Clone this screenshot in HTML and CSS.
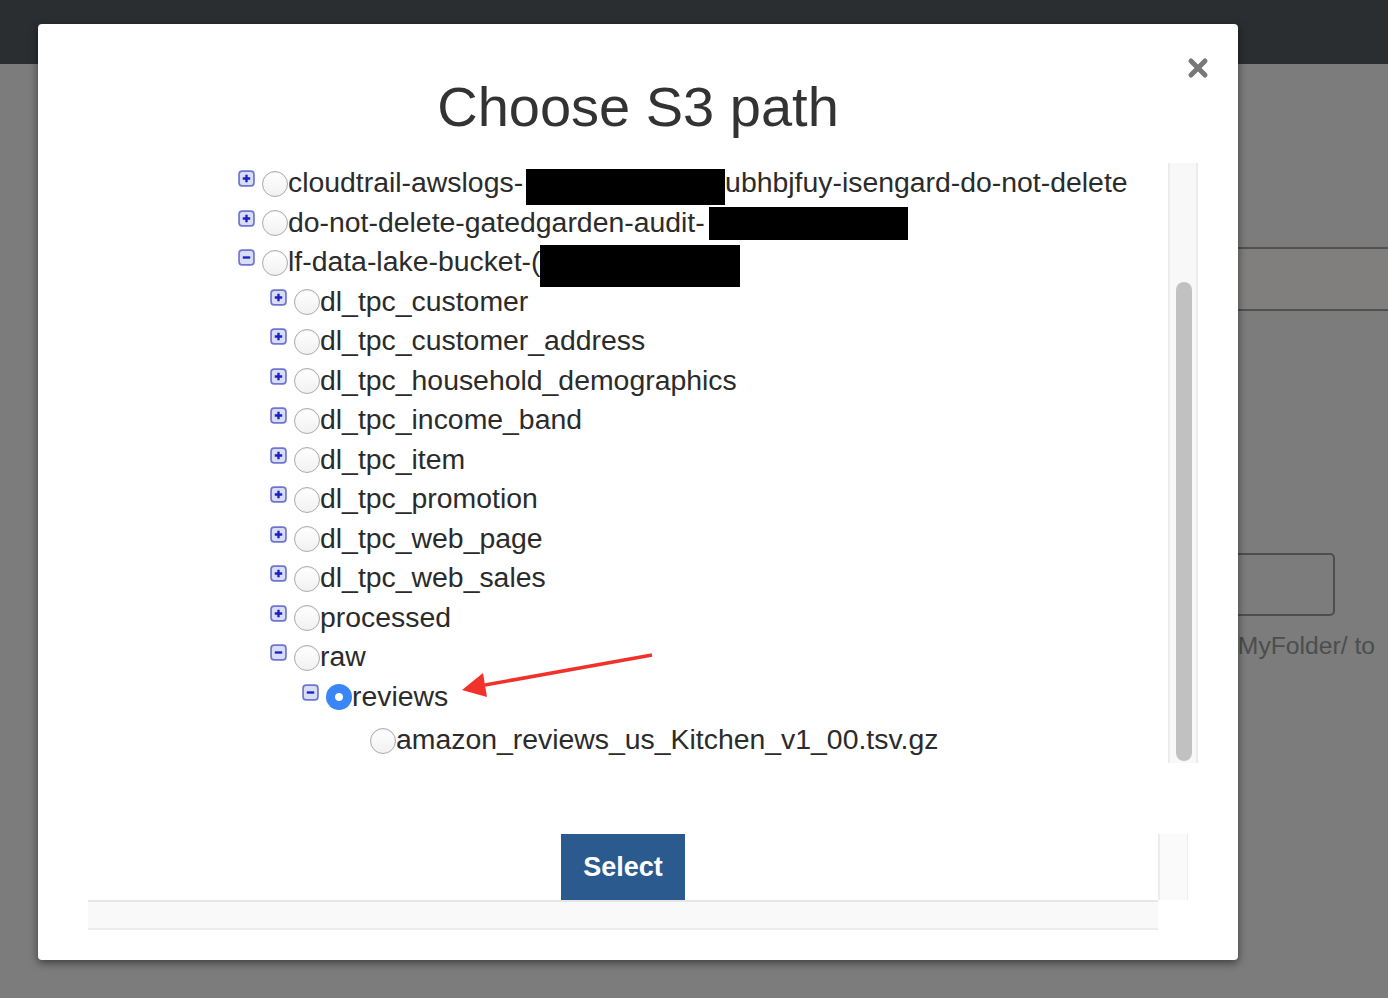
FILE: index.html
```html
<!DOCTYPE html>
<html lang="en">
<head>
<meta charset="utf-8">
<title>Choose S3 path</title>
<link rel="stylesheet" href="styles.css">
</head>
<body>
<header class="navbar"></header>
<main class="page">
  <div class="band"></div>
  <div class="field"></div>
  <p class="hint">/MyFolder/ to</p>
</main>

<div class="modal">
  <button class="close" aria-label="Close">
    <svg viewBox="0 0 22 22" width="22" height="22"><path d="M4 4L18 18M18 4L4 18"/></svg>
  </button>
  <h2 class="modal-title">Choose S3 path</h2>

  <div class="tree-box">
    <div class="tree">
      <ul class="level level-root">
        <li>
          <div class="row">
            <svg class="toggle" viewBox="0 0 16 16"><rect x="1" y="1" width="14" height="14" rx="3"/><path d="M4.5 8h7M8 4.5v7"/></svg>
            <input type="radio" name="s3path" class="radio">
            <span class="label">cloudtrail-awslogs-</span><span class="redact r1"></span><span class="label">ubhbjfuy-isengard-do-not-delete</span>
          </div>
        </li>
        <li>
          <div class="row">
            <svg class="toggle" viewBox="0 0 16 16"><rect x="1" y="1" width="14" height="14" rx="3"/><path d="M4.5 8h7M8 4.5v7"/></svg>
            <input type="radio" name="s3path" class="radio">
            <span class="label">do-not-delete-gatedgarden-audit-</span><span class="redact r2"></span>
          </div>
        </li>
        <li>
          <div class="row">
            <svg class="toggle" viewBox="0 0 16 16"><rect x="1" y="1" width="14" height="14" rx="3"/><path d="M4.5 8h7"/></svg>
            <input type="radio" name="s3path" class="radio">
            <span class="label">lf-data-lake-bucket-(</span><span class="redact r3"></span>
          </div>
          <ul class="level">
            <li><div class="row"><svg class="toggle" viewBox="0 0 16 16"><rect x="1" y="1" width="14" height="14" rx="3"/><path d="M4.5 8h7M8 4.5v7"/></svg><input type="radio" name="s3path" class="radio"><span class="label">dl_tpc_customer</span></div></li>
            <li><div class="row"><svg class="toggle" viewBox="0 0 16 16"><rect x="1" y="1" width="14" height="14" rx="3"/><path d="M4.5 8h7M8 4.5v7"/></svg><input type="radio" name="s3path" class="radio"><span class="label">dl_tpc_customer_address</span></div></li>
            <li><div class="row"><svg class="toggle" viewBox="0 0 16 16"><rect x="1" y="1" width="14" height="14" rx="3"/><path d="M4.5 8h7M8 4.5v7"/></svg><input type="radio" name="s3path" class="radio"><span class="label">dl_tpc_household_demographics</span></div></li>
            <li><div class="row"><svg class="toggle" viewBox="0 0 16 16"><rect x="1" y="1" width="14" height="14" rx="3"/><path d="M4.5 8h7M8 4.5v7"/></svg><input type="radio" name="s3path" class="radio"><span class="label">dl_tpc_income_band</span></div></li>
            <li><div class="row"><svg class="toggle" viewBox="0 0 16 16"><rect x="1" y="1" width="14" height="14" rx="3"/><path d="M4.5 8h7M8 4.5v7"/></svg><input type="radio" name="s3path" class="radio"><span class="label">dl_tpc_item</span></div></li>
            <li><div class="row"><svg class="toggle" viewBox="0 0 16 16"><rect x="1" y="1" width="14" height="14" rx="3"/><path d="M4.5 8h7M8 4.5v7"/></svg><input type="radio" name="s3path" class="radio"><span class="label">dl_tpc_promotion</span></div></li>
            <li><div class="row"><svg class="toggle" viewBox="0 0 16 16"><rect x="1" y="1" width="14" height="14" rx="3"/><path d="M4.5 8h7M8 4.5v7"/></svg><input type="radio" name="s3path" class="radio"><span class="label">dl_tpc_web_page</span></div></li>
            <li><div class="row"><svg class="toggle" viewBox="0 0 16 16"><rect x="1" y="1" width="14" height="14" rx="3"/><path d="M4.5 8h7M8 4.5v7"/></svg><input type="radio" name="s3path" class="radio"><span class="label">dl_tpc_web_sales</span></div></li>
            <li><div class="row"><svg class="toggle" viewBox="0 0 16 16"><rect x="1" y="1" width="14" height="14" rx="3"/><path d="M4.5 8h7M8 4.5v7"/></svg><input type="radio" name="s3path" class="radio"><span class="label">processed</span></div></li>
            <li>
              <div class="row"><svg class="toggle" viewBox="0 0 16 16"><rect x="1" y="1" width="14" height="14" rx="3"/><path d="M4.5 8h7"/></svg><input type="radio" name="s3path" class="radio"><span class="label">raw</span></div>
              <ul class="level">
                <li>
                  <div class="row"><svg class="toggle" viewBox="0 0 16 16"><rect x="1" y="1" width="14" height="14" rx="3"/><path d="M4.5 8h7"/></svg><input type="radio" name="s3path" class="radio" checked><span class="label">reviews</span></div>
                  <ul class="level">
                    <li><div class="row leaf"><input type="radio" name="s3path" class="radio"><span class="label">amazon_reviews_us_Kitchen_v1_00.tsv.gz</span></div></li>
                  </ul>
                </li>
              </ul>
            </li>
          </ul>
        </li>
      </ul>
    </div>
    <div class="track"><div class="thumb"></div></div>
  </div>

  <div class="footer">
    <div class="footer-main"><button class="btn-select">Select</button></div>
    <div class="vstrip"></div>
    <div class="hstrip"></div>
    <div class="corner"></div>
  </div>
</div>

<svg class="annotation" width="205" height="54" viewBox="0 0 205 54">
  <path class="arrow-line" d="M197 7L30 37"/>
  <path class="arrow-head" d="M7 42L28 25L32 49Z"/>
</svg>
</body>
</html>
```
FILE: styles.css
```css
html, body {
  margin: 0;
  padding: 0;
}

body {
  width: 1388px;
  height: 998px;
  overflow: hidden;
  background: #7b7c7b;
  font-family: "Liberation Sans", Arial, sans-serif;
  position: relative;
}

.navbar {
  height: 64px;
  background: #2a2e30;
}

.page {
  padding-top: 183px;
}

.band {
  height: 60px;
  margin-left: 1100px;
  border-top: 2px solid #4f5251;
  border-bottom: 2px solid #4f5251;
  background: #807f7e;
}

.field {
  margin: 242px 53px 0 1100px;
  height: 63px;
  box-sizing: border-box;
  border: 2px solid #4c4f4e;
  border-radius: 5px;
}

.hint {
  margin: 15px 0 0 1231px;
  font-size: 24.7px;
  line-height: 30px;
  color: #4b4e4d;
  white-space: nowrap;
}

/* Modal */
.modal {
  position: absolute;
  left: 38px;
  top: 24px;
  width: 1200px;
  height: 936px;
  box-sizing: border-box;
  background: #fff;
  border-radius: 4px;
  box-shadow: 0 3px 9px rgba(0, 0, 0, 0.5);
  padding-bottom: 30px;
}

.close {
  position: absolute;
  top: 33px;
  right: 29px;
  width: 22px;
  height: 22px;
  padding: 0;
  border: 0;
  background: none;
}

.close path {
  stroke: #787878;
  stroke-width: 5;
  stroke-linecap: round;
  fill: none;
}

.modal-title {
  margin: 0;
  padding-top: 51px;
  font-size: 56px;
  line-height: 64px;
  font-weight: normal;
  color: #333;
  text-align: center;
}

.tree-box {
  display: flex;
  height: 600px;
  margin: 24px 40px 0 50px;
}

.tree {
  flex: 1;
  overflow: hidden;
}

.level {
  list-style: none;
  margin: 0;
  padding: 0 0 0 32px;
}

.level-root {
  padding-left: 150px;
}

.row {
  display: flex;
  align-items: center;
  height: 39.5px;
  white-space: nowrap;
}

.toggle {
  width: 17px;
  height: 17px;
  flex-shrink: 0;
  margin: -8px 7px 0 0;
}

.toggle rect {
  fill: #d9ddf6;
  stroke: #6d76cf;
  stroke-width: 1.6;
}

.toggle path {
  stroke: #1a20c8;
  stroke-width: 2.2;
  fill: none;
}

.radio {
  appearance: none;
  -webkit-appearance: none;
  flex-shrink: 0;
  width: 26px;
  height: 26px;
  margin: 2px 0 0 0;
  box-sizing: border-box;
  border: 1px solid #ababab;
  border-radius: 50%;
  background: linear-gradient(#ffffff, #f1f1f1);
  box-shadow: inset 0 1px 1px rgba(0, 0, 0, 0.06);
}

.radio:checked {
  border: 0;
  background: radial-gradient(circle, #ffffff 0 3.5px, #3a86f6 4.5px);
  box-shadow: none;
}

.label {
  font-size: 28.4px;
  line-height: 39.5px;
  color: #2b2b2b;
}

.leaf {
  margin-top: 4px;
  padding-left: 36px;
}

.redact {
  flex-shrink: 0;
  background: #000;
}

.r1 {
  width: 199px;
  height: 36px;
  margin: 8px 0 0 3px;
}

.r2 {
  width: 199px;
  height: 33px;
  margin: 2px 0 0 4px;
}

.r3 {
  width: 200px;
  height: 42px;
  margin: 8px 0 0 0;
}

.track {
  width: 30px;
  box-sizing: border-box;
  border-left: 2px solid #ececec;
  border-right: 2px solid #ececec;
  background: #f8f8f8;
  padding: 119px 0 0 6px;
}

.thumb {
  width: 16px;
  height: 479px;
  border-radius: 8px;
  background: #c1c1c1;
}

/* Footer */
.footer {
  display: grid;
  grid-template-columns: 1070px 30px;
  grid-template-rows: 66px 30px;
  margin: 71px 50px 0 50px;
}

.footer-main {
  display: flex;
  justify-content: center;
}

.btn-select {
  width: 124px;
  height: 66px;
  border: 0;
  border-radius: 0;
  background: #2b5b8e;
  color: #fff;
  font-family: "Liberation Sans", Arial, sans-serif;
  font-weight: bold;
  font-size: 27px;
  padding: 0;
}

.vstrip {
  box-sizing: border-box;
  border-left: 2px solid #ececec;
  border-right: 1px solid #ededed;
  background: #fafafa;
}

.hstrip {
  box-sizing: border-box;
  border-top: 2px solid #e6e6e6;
  border-bottom: 2px solid #ececec;
  background: #f9f9f9;
}

/* Annotation arrow */
.annotation {
  position: absolute;
  left: 455px;
  top: 648px;
}

.arrow-line {
  stroke: #f0322a;
  stroke-width: 3.5;
  fill: none;
}

.arrow-head {
  fill: #f0322a;
}
```
